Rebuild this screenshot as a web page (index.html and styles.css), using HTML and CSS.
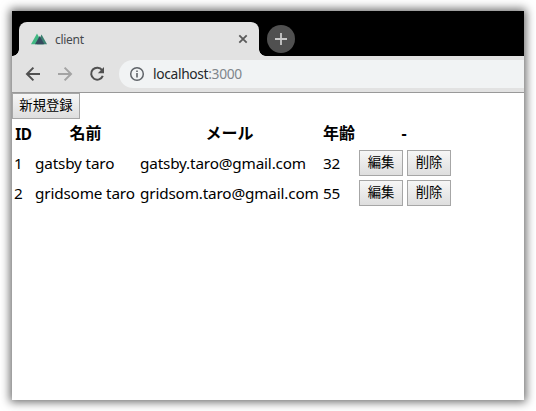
FILE: index.html
```
<!DOCTYPE html>
<html lang="ja">
<head>
<meta charset="utf-8">
<title>client</title>
<link rel="stylesheet" href="styles.css">
</head>
<body>
<div class="window">
  <header class="tabstrip">
    <div class="tab">
      <svg class="favicon" width="16" height="12" viewBox="0 0 16 12"><path d="M0 11.3 6 .6 12 11.3Z" fill="#41b883"/><path d="M6 11.3 10.5 1.5 16 11.3Z" fill="#3b8070"/><path d="M4 11.3 8.7 3 13.3 11.3Z" fill="#35495e"/></svg>
      <span class="tab-title">client</span>
      <svg class="tab-close" width="10" height="10" viewBox="0 0 10 10"><path d="M1.3 1.3 8.7 8.7M8.7 1.3 1.3 8.7" stroke="#5a5a5a" stroke-width="1.8"/></svg>
    </div>
    <div class="new-tab"><svg width="12" height="12" viewBox="0 0 12 12"><path d="M6 0V12M0 6H12" stroke="#c8c8c8" stroke-width="1.8"/></svg></div>
  </header>
  <nav class="toolbar">
    <svg class="nav-icon" width="16" height="16" viewBox="0 0 16 16"><path d="M15 8H2.4M8.4 1.6 2 8 8.4 14.4" fill="none" stroke="#505050" stroke-width="2"/></svg>
    <svg class="nav-icon" width="16" height="16" viewBox="0 0 16 16"><path d="M1 8H13.6M7.6 1.6 14 8 7.6 14.4" fill="none" stroke="#a3a3a3" stroke-width="2"/></svg>
    <svg class="nav-icon" width="16" height="16" viewBox="0 0 16 16"><path d="M13.1 4.2A6 6 0 1 0 13.8 9.8" fill="none" stroke="#505050" stroke-width="2"/><path d="M15 1V7.2H8.8Z" fill="#505050"/></svg>
    <div class="address">
      <svg class="info" width="16" height="16" viewBox="0 0 16 16"><circle cx="8" cy="8" r="6.3" fill="none" stroke="#5f6368" stroke-width="1.5"/><path d="M8 7V11.6M8 4.4V6" stroke="#5f6368" stroke-width="1.6"/></svg>
      <span class="url">localhost<span class="port">:3000</span></span>
    </div>
  </nav>
  <main class="page">
    <button class="btn register">新規登録</button>
    <table class="users">
      <colgroup><col class="c-id"><col class="c-name"><col class="c-mail"><col class="c-age"><col class="c-actions"></colgroup>
      <tr class="head"><th class="latin">ID</th><th>名前</th><th>メール</th><th>年齢</th><th>-</th></tr>
      <tr><td>1</td><td>gatsby taro</td><td>gatsby.taro@gmail.com</td><td>32</td><td><div class="actions"><button class="btn">編集</button><button class="btn">削除</button></div></td></tr>
      <tr><td>2</td><td>gridsome taro</td><td>gridsom.taro@gmail.com</td><td>55</td><td><div class="actions"><button class="btn">編集</button><button class="btn">削除</button></div></td></tr>
    </table>
  </main>
</div>
</body>
</html>
```
FILE: styles.css
```
* { box-sizing: border-box; }
body {
  margin: 0;
  width: 536px;
  height: 411px;
  padding: 11px 12px;
  overflow: hidden;
  background: #fff;
  font-family: "Noto Sans", "Noto Sans CJK JP", sans-serif;
}
.window {
  display: flex;
  flex-direction: column;
  width: 512px;
  height: 389px;
  background: #fff;
  box-shadow: 0 0 9px 2px rgba(0, 0, 0, .6);
}
.tabstrip {
  display: flex;
  height: 45px;
  padding: 11px 0 0 7px;
  background: #000;
}
.tab {
  position: relative;
  display: flex;
  align-items: center;
  width: 240px;
  height: 34px;
  padding: 0 11px 0 12px;
  border-radius: 8px 8px 0 0;
  background: #e2e2e2;
}
.tab::before,
.tab::after {
  content: "";
  position: absolute;
  bottom: 0;
  width: 7px;
  height: 7px;
}
.tab::before { left: -7px; background: radial-gradient(circle at 0 0, #000 6.5px, #e2e2e2 7.2px); }
.tab::after { right: -7px; background: radial-gradient(circle at 100% 0, #000 6.5px, #e2e2e2 7.2px); }
.tab-title {
  flex: 1;
  margin-left: 8px;
  padding-top: 2px;
  font-size: 12px;
  line-height: 16px;
  letter-spacing: -.3px;
  color: #45494d;
}
.new-tab {
  display: flex;
  align-items: center;
  justify-content: center;
  width: 28px;
  height: 28px;
  margin: 3px 0 0 8px;
  border-radius: 50%;
  background: #505050;
}
.toolbar {
  display: flex;
  align-items: center;
  flex: none;
  height: 37px;
  padding: 0 0 1px 13px;
  background: #e2e2e2;
  border-bottom: 1px solid #999;
}
.nav-icon { flex: none; margin-right: 16px; }
.nav-icon:nth-child(3) { margin-right: 14px; }
.address {
  display: flex;
  align-items: center;
  flex: 1;
  height: 28px;
  padding-left: 10px;
  border-radius: 14px 0 0 14px;
  background: #f1f3f4;
}
.url {
  margin-left: 8px;
  font-size: 13.8px;
  line-height: 20px;
  letter-spacing: -.34px;
  color: #24272b;
}
.port { color: #80868b; }
.page { color: #000; }
.btn {
  display: block;
  width: 44px;
  height: 26px;
  margin: 0;
  padding: 0 0 2px;
  border: 1px solid #a6a6a6;
  border-radius: 0;
  background: linear-gradient(#f6f6f6, #dedede);
  font-family: "Noto Sans CJK JP", sans-serif;
  font-size: 13.33px;
  line-height: 20px;
  color: #000;
}
.register { width: 68px; }
.users {
  width: 441px;
  table-layout: fixed;
  border-spacing: 2px;
}
.users th,
.users td {
  height: 28px;
  padding: 0;
  line-height: 22px;
  white-space: nowrap;
}
.users td {
  font-size: 15.3px;
  letter-spacing: -.17px;
}
.users th {
  height: 26px;
  padding: 0 2px 2px 0;
  font-size: 16px;
}
.users th.latin {
  padding: 0;
  font-size: 15.3px;
  letter-spacing: -.3px;
}
.c-id { width: 19px; }
.c-name { width: 103px; }
.c-mail { width: 181px; }
.c-age { width: 34px; }
.c-actions { width: 92px; }
.actions {
  display: flex;
  gap: 4px;
}
```
